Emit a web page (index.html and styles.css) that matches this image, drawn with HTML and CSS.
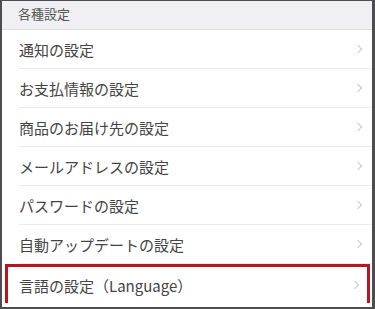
FILE: index.html
```html
<!DOCTYPE html>
<html lang="ja">
<head>
    <meta charset="UTF-8">
    <meta name="viewport" content="width=device-width, initial-scale=1.0">
    <title>各種設定</title>
    <link rel="stylesheet" href="styles.css">
</head>
<body>

<div class="frame">
    <div class="section-head">各種設定</div>
    <ul class="menu">
        <li class="menu-item"><span>通知の設定</span><i class="chevron"></i></li>
        <li class="menu-item"><span>お支払情報の設定</span><i class="chevron"></i></li>
        <li class="menu-item"><span>商品のお届け先の設定</span><i class="chevron"></i></li>
        <li class="menu-item"><span>メールアドレスの設定</span><i class="chevron"></i></li>
        <li class="menu-item"><span>パスワードの設定</span><i class="chevron"></i></li>
        <li class="menu-item"><span>自動アップデートの設定</span><i class="chevron"></i></li>
        <li class="menu-item highlight"><span>言語の設定（Language）</span><i class="chevron"></i></li>
    </ul>
</div>

</body>
</html>
```

FILE: styles.css
```css
/* page frame */
body {
    margin: 0;
    font-family: "Noto Sans CJK JP", "Noto Sans", sans-serif;
    background: #fff;
}

.frame {
    box-sizing: border-box;
    height: 309px;
    border-style: solid;
    border-color: #4d4d4d;
    border-width: 1px 3px 2px 2px;
    overflow: hidden;
}

/* grey section header */
.section-head {
    height: 28px;
    line-height: 26px;
    padding-left: 16px;
    font-size: 13px;
    color: #555;
    background: #efeff4;
    border-bottom: 1px solid #dcdce2;
}

/* rows */
.menu {
    list-style: none;
    margin: 0;
    padding: 0 0 0 17px;
}

.menu-item {
    display: flex;
    align-items: center;
    justify-content: space-between;
    height: 38px;
    padding-right: 11px;
    font-size: 15px;
    color: #444;
    border-bottom: 1px solid #ececec;
}

.menu-item:last-child {
    border-bottom: none;
}

.chevron {
    width: 5px;
    height: 5px;
    border-top: 1.5px solid #c8c8c8;
    border-right: 1.5px solid #c8c8c8;
    transform: rotate(45deg);
}

/* red box around the language row */
.highlight {
    margin-left: -14px;
    margin-right: 2px;
    padding-left: 11px;
    padding-right: 9px;
    height: 36px;
    border: 3px solid #b8151e;
}
```
